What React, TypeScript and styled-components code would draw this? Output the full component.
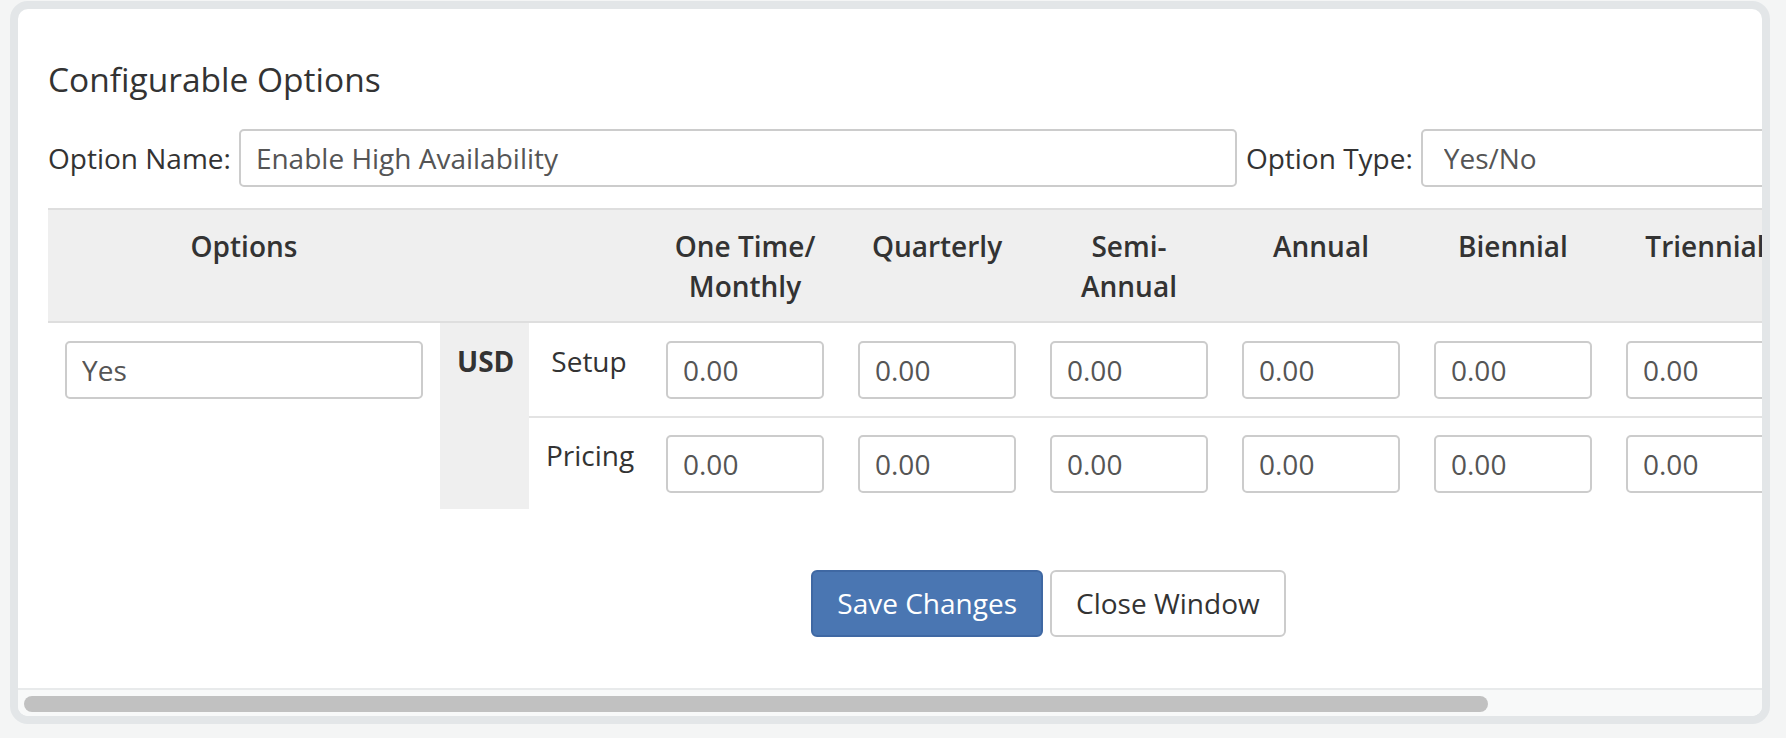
import React from "react";
import styled, { createGlobalStyle } from "styled-components";

const GlobalStyle = createGlobalStyle`
  html, body {
    margin: 0;
    padding: 0;
    background: #f4f5f5;
  }
  body {
    font-family: "Open Sans", "Liberation Sans", Arial, sans-serif;
    color: #333;
    overflow: hidden;
  }
  * { box-sizing: border-box; }
`;

const CONTENT_WIDTH = 2061;
const VIEW_WIDTH = 1744;

const Page = styled.div`
  padding: 1px 0 0 10px;
  height: 738px;
`;

const Frame = styled.div`
  width: 1760px;
  height: 723px;
  border: 8px solid #e3e6e8;
  border-radius: 18px;
  background: #fff;
  overflow: hidden;
  display: flex;
  flex-direction: column;
`;

const Viewport = styled.div`
  flex: 1;
  overflow: hidden;
`;

const ScrollTrack = styled.div`
  height: 28px;
  flex: none;
  background: #f8f9f9;
  border-top: 2px solid #e8eaeb;
  padding: 6px 6px 0;
`;

const ScrollThumb = styled.div`
  height: 16px;
  border-radius: 8px;
  background: #c1c1c1;
`;

const Content = styled.div`
  width: ${CONTENT_WIDTH}px;
  padding: 51px 30px 51px;
`;

const Title = styled.h3`
  margin: 0;
  font-size: 33.5px;
  font-weight: 400;
  line-height: 38px;
  color: #333;
`;

const OptionRow = styled.div`
  display: flex;
  align-items: center;
  height: 58px;
  margin-top: 31px;
`;

const FieldLabel = styled.label<{ $gapLeft?: number }>`
  font-size: 28px;
  line-height: 40px;
  white-space: nowrap;
  margin-left: ${(p) => p.$gapLeft ?? 0}px;
  margin-right: 8px;
  color: #333;
`;

const TextInput = styled.input<{ $width?: number }>`
  display: block;
  width: ${(p) => (p.$width ? `${p.$width}px` : "100%")};
  height: 58px;
  padding: 0 15px;
  border: 2px solid #cccccc;
  border-radius: 5px;
  background: #fff;
  font-family: "Open Sans", "Liberation Sans", Arial, sans-serif;
  font-size: 28px;
  color: #555;
  outline: none;
`;

const TypeSelect = styled.select`
  flex: 1;
  height: 58px;
  padding: 0 21px;
  border: 2px solid #cccccc;
  border-radius: 5px;
  background: #fff;
  font-family: "Open Sans", "Liberation Sans", Arial, sans-serif;
  font-size: 28px;
  color: #555;
  appearance: none;
  -webkit-appearance: none;
  outline: none;
`;

const PriceTable = styled.table`
  margin-top: 21px;
  width: 2001px;
  table-layout: fixed;
  border-collapse: separate;
  border-spacing: 0;
`;

const HeadCell = styled.th`
  background: #efefef;
  border-top: 2px solid #dedede;
  border-bottom: 2px solid #dedede;
  padding: 16px 17px 15px;
  font-size: 28px;
  line-height: 40px;
  font-weight: 600;
  color: #333;
  text-align: center;
  vertical-align: top;
`;

const Cell = styled.td<{ $second?: boolean; $shaded?: boolean }>`
  padding: ${(p) => (p.$second ? "17px 17px 16px" : "18px 17px 17px")};
  border-top: ${(p) => (p.$second ? "2px solid #e3e3e3" : "0")};
  background: ${(p) => (p.$shaded ? "#efefef" : "transparent")};
  vertical-align: top;
  text-align: center;
  font-size: 28px;
  line-height: 40px;
  color: #333;
`;

const Currency = styled.span`
  font-weight: 700;
`;

const ButtonRow = styled.div`
  display: flex;
  justify-content: center;
  gap: 7px;
  margin-top: 61px;
`;

const Button = styled.button<{ $primary?: boolean }>`
  font-family: "Open Sans", "Liberation Sans", Arial, sans-serif;
  font-size: 28px;
  line-height: 40px;
  padding: 11px 24px 12px;
  border: 2px solid ${(p) => (p.$primary ? "#3f68a3" : "#cccccc")};
  border-radius: 6px;
  background: ${(p) => (p.$primary ? "#4a76b2" : "#ffffff")};
  color: ${(p) => (p.$primary ? "#ffffff" : "#333333")};
  cursor: pointer;
  white-space: nowrap;
`;

const Check = styled.input`
  width: 26px;
  height: 26px;
  margin: 7px 0 0;
`;

const periods: React.ReactNode[] = [
  <>One Time/<br />Monthly</>,
  "Quarterly",
  <>Semi-<br />Annual</>,
  "Annual",
  "Biennial",
  "Triennial",
];

const colWidths = [392, 89, 120, 192, 192, 192, 192, 192, 192, 150, 98];

export default function App() {
  const thumbWidth = Math.round((VIEW_WIDTH * VIEW_WIDTH) / CONTENT_WIDTH) - 12;
  return (
    <>
      <GlobalStyle />
      <Page>
        <Frame>
          <Viewport>
            <Content>
              <Title>Configurable Options</Title>
              <OptionRow>
                <FieldLabel>Option Name:</FieldLabel>
                <TextInput $width={998} defaultValue="Enable High Availability" />
                <FieldLabel $gapLeft={9}>Option Type:</FieldLabel>
                <TypeSelect defaultValue="yesno">
                  <option value="dropdown">Dropdown</option>
                  <option value="radio">Radio</option>
                  <option value="yesno">Yes/No</option>
                  <option value="quantity">Quantity</option>
                </TypeSelect>
              </OptionRow>

              <PriceTable>
                <colgroup>
                  {colWidths.map((w, i) => (
                    <col key={i} style={{ width: w }} />
                  ))}
                </colgroup>
                <thead>
                  <tr>
                    <HeadCell>Options</HeadCell>
                    <HeadCell colSpan={2} />
                    {periods.map((p, i) => (
                      <HeadCell key={i}>{p}</HeadCell>
                    ))}
                    <HeadCell>Order</HeadCell>
                    <HeadCell>Hide</HeadCell>
                  </tr>
                </thead>
                <tbody>
                  <tr>
                    <Cell rowSpan={2}>
                      <TextInput defaultValue="Yes" />
                    </Cell>
                    <Cell rowSpan={2} $shaded>
                      <Currency>USD</Currency>
                    </Cell>
                    <Cell>Setup</Cell>
                    {periods.map((_, i) => (
                      <Cell key={i}>
                        <TextInput defaultValue="0.00" />
                      </Cell>
                    ))}
                    <Cell rowSpan={2}>
                      <TextInput defaultValue="0" />
                    </Cell>
                    <Cell rowSpan={2}>
                      <Check type="checkbox" />
                    </Cell>
                  </tr>
                  <tr>
                    <Cell $second>Pricing</Cell>
                    {periods.map((_, i) => (
                      <Cell key={i} $second>
                        <TextInput defaultValue="0.00" />
                      </Cell>
                    ))}
                  </tr>
                </tbody>
              </PriceTable>

              <ButtonRow>
                <Button $primary>Save Changes</Button>
                <Button>Close Window</Button>
              </ButtonRow>
            </Content>
          </Viewport>
          <ScrollTrack>
            <ScrollThumb style={{ width: thumbWidth }} />
          </ScrollTrack>
        </Frame>
      </Page>
    </>
  );
}
